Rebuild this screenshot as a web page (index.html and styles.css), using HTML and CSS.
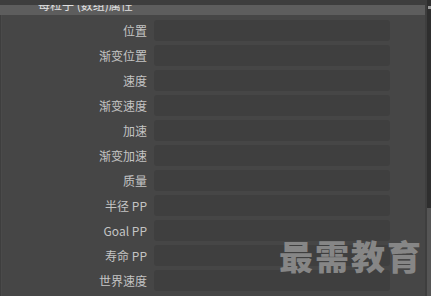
FILE: index.html
```html
<!DOCTYPE html>
<html lang="zh">
<head>
<meta charset="utf-8">
<link rel="stylesheet" href="styles.css">
</head>
<body>
<div class="app">
  <div class="main">
    <div class="strip"></div>
    <div class="header"><span class="header-text">每粒子 (数组)属性</span></div>
    <div class="panel">
      <div class="row"><span class="label">位置</span><div class="field"></div></div>
      <div class="row"><span class="label">渐变位置</span><div class="field"></div></div>
      <div class="row"><span class="label">速度</span><div class="field"></div></div>
      <div class="row"><span class="label">渐变速度</span><div class="field"></div></div>
      <div class="row"><span class="label">加速</span><div class="field"></div></div>
      <div class="row"><span class="label">渐变加速</span><div class="field"></div></div>
      <div class="row"><span class="label">质量</span><div class="field"></div></div>
      <div class="row"><span class="label">半径 PP</span><div class="field"></div></div>
      <div class="row"><span class="label">Goal PP</span><div class="field"></div></div>
      <div class="row"><span class="label">寿命 PP</span><div class="field"></div></div>
      <div class="row"><span class="label">世界速度</span><div class="field"></div></div>
    </div>
  </div>
  <div class="scroll">
    <div class="arrow"></div>
    <div class="track"></div>
    <div class="thumb"></div>
  </div>
  <div class="watermark">最需教育</div>
</div>
</body>
</html>
```
FILE: styles.css
```css
html, body {
  margin: 0;
  padding: 0;
  background: #444444;
  width: 431px;
  height: 296px;
  overflow: hidden;
}
.app {
  position: relative;
  display: flex;
  width: 431px;
  height: 296px;
  font-family: "Noto Sans CJK SC", "Noto Sans", sans-serif;
}
.main {
  width: 427px;
  display: flex;
  flex-direction: column;
  background: #3e3e3e;
}
.strip {
  height: 5px;
  background: #3d3d3d;
}
.header {
  height: 10px;
  width: 425px;
  background: #5d5d5d;
  overflow: hidden;
  position: relative;
}
.header-text {
  display: block;
  margin-left: 38px;
  margin-top: -8px;
  font-size: 12px;
  line-height: 16px;
  color: #e0e0e0;
  white-space: nowrap;
}
.panel {
  flex: 1;
  width: 423px;
  margin-left: 1px;
  background: #464646;
  border-left: 1px solid #4a4a4a;
  padding-top: 5px;
  display: flex;
  flex-direction: column;
  gap: 4px;
}
.row {
  display: flex;
  align-items: center;
  height: 21px;
  gap: 7px;
}
.label {
  width: 145px;
  text-align: right;
  font-size: 12px;
  color: #c4c4c4;
  white-space: nowrap;
}
.field {
  width: 236px;
  height: 21px;
  background: #3f3f3f;
  border-radius: 3px;
}
.scroll {
  width: 4px;
  background: #2e2e2e;
  display: flex;
  flex-direction: column;
}
.arrow {
  height: 10px;
  margin-top: 6px;
  background: linear-gradient(to bottom, #9a9a9a 0, #9a9a9a 3px, transparent 3px);
  width: 3px;
  margin-left: 1px;
}
.track {
  flex: 1;
}
.thumb {
  height: 88px;
  background: #555555;
}
.watermark {
  position: absolute;
  left: 279px;
  top: 234px;
  font-size: 34px;
  font-weight: 900;
  letter-spacing: 2px;
  color: #868686;
  line-height: 44px;
  font-family: "Noto Sans CJK SC", sans-serif;
}
```
